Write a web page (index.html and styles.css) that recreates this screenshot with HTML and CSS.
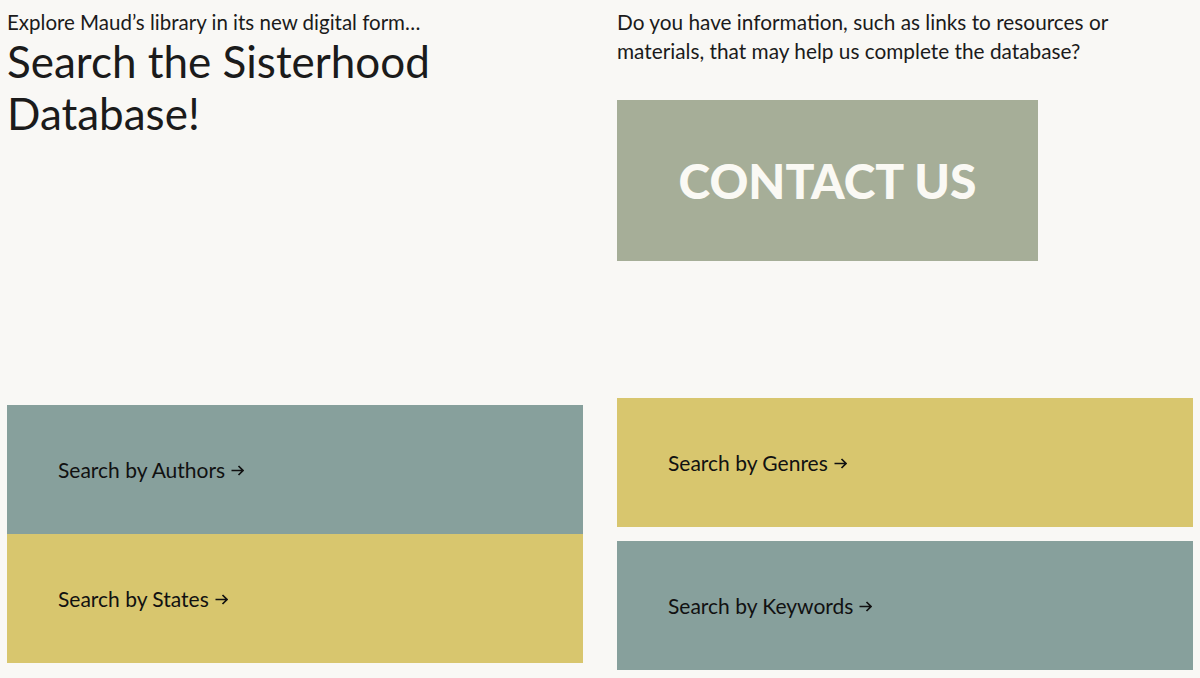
FILE: index.html
```html
<!DOCTYPE html>
<html lang="en">
<head>
    <meta charset="UTF-8">
    <meta name="viewport" content="width=device-width, initial-scale=1.0">
    <title>Sisterhood Database</title>
    <link rel="stylesheet" href="styles.css">
</head>
<body>
    <div class="page">
        <div class="column">
            <div class="intro">
                <p class="lead">Explore Maud’s library in its new digital form…</p>
                <h1>Search the Sisterhood Database!</h1>
            </div>
            <div class="tiles">
                <a class="tile teal" href="#">Search by Authors
                    <svg class="arrow" viewBox="0 0 13 11"><path d="M0.5 5.5H12M7.5 1L12 5.5L7.5 10"/></svg>
                </a>
                <a class="tile yellow" href="#">Search by States
                    <svg class="arrow" viewBox="0 0 13 11"><path d="M0.5 5.5H12M7.5 1L12 5.5L7.5 10"/></svg>
                </a>
            </div>
        </div>

        <div class="column">
            <div class="intro intro-right">
                <p class="question">Do you have information, such as links to resources or materials, that may help us complete the database?</p>
                <a class="contact-button" href="#">CONTACT US</a>
            </div>
            <div class="tiles tiles-spaced">
                <a class="tile yellow" href="#">Search by Genres
                    <svg class="arrow" viewBox="0 0 13 11"><path d="M0.5 5.5H12M7.5 1L12 5.5L7.5 10"/></svg>
                </a>
                <a class="tile teal" href="#">Search by Keywords
                    <svg class="arrow" viewBox="0 0 13 11"><path d="M0.5 5.5H12M7.5 1L12 5.5L7.5 10"/></svg>
                </a>
            </div>
        </div>
    </div>
</body>
</html>
```

FILE: styles.css
```css
* {
    margin: 0;
    padding: 0;
    box-sizing: border-box;
}

body {
    font-family: Lato, 'Open Sans', sans-serif;
    background: #f9f8f5;
    color: #1b1b1b;
}

.page {
    display: grid;
    grid-template-columns: 576px 576px;
    gap: 34px;
    padding: 0 7px;
}

.column {
    display: flex;
    flex-direction: column;
}

.intro {
    height: 405px;
    padding-top: 9px;
}

.intro-right {
    height: 398px;
    padding-top: 7px;
}

.lead {
    font-size: 20.5px;
    line-height: 26px;
}

h1 {
    font-weight: 400;
    font-size: 44px;
    line-height: 52px;
    width: 460px;
}

.question {
    font-size: 20.8px;
    line-height: 29px;
    width: 520px;
}

.contact-button {
    display: flex;
    align-items: center;
    justify-content: center;
    width: 421px;
    height: 161px;
    margin-top: 35px;
    background: #a6ae98;
    color: #faf9f4;
    font-weight: 900;
    font-size: 48px;
    text-decoration: none;
}

.tiles {
    display: flex;
    flex-direction: column;
}

.tiles-spaced {
    gap: 14px;
}

.tile {
    display: flex;
    align-items: center;
    gap: 6px;
    height: 129px;
    padding-left: 51px;
    font-size: 21px;
    color: #111;
    text-decoration: none;
}

.arrow {
    width: 13px;
    height: 11px;
    margin-top: 1px;
    fill: none;
    stroke: #111;
    stroke-width: 1.7;
}

.teal {
    background: #87a09c;
}

.yellow {
    background: #d8c66e;
}
```
